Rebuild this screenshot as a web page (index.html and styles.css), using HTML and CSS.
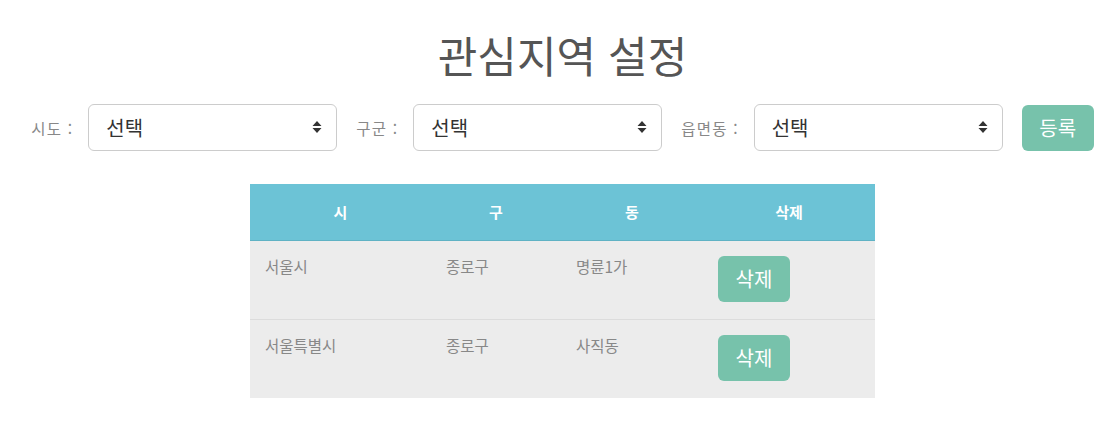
FILE: index.html
```html
<!DOCTYPE html>
<html lang="ko">
<head>
<meta charset="utf-8">
<title>관심지역 설정</title>
<link rel="stylesheet" href="styles.css">
</head>
<body>
<div class="page">
  <h1 class="title">관심지역 설정</h1>
  <div class="filters">
    <label class="flabel">시도 :</label>
    <div class="sel-wrap">
      <select class="sel"><option>선택</option></select>
      <svg class="caret" width="10" height="14" viewBox="0 0 10 14"><path d="M5 1 L9.5 6 H0.5 Z M5 13 L9.5 8 H0.5 Z" fill="#333"/></svg>
    </div>
    <label class="flabel">구군 :</label>
    <div class="sel-wrap">
      <select class="sel"><option>선택</option></select>
      <svg class="caret" width="10" height="14" viewBox="0 0 10 14"><path d="M5 1 L9.5 6 H0.5 Z M5 13 L9.5 8 H0.5 Z" fill="#333"/></svg>
    </div>
    <label class="flabel">읍면동 :</label>
    <div class="sel-wrap">
      <select class="sel"><option>선택</option></select>
      <svg class="caret" width="10" height="14" viewBox="0 0 10 14"><path d="M5 1 L9.5 6 H0.5 Z M5 13 L9.5 8 H0.5 Z" fill="#333"/></svg>
    </div>
    <button class="btn btn-reg">등록</button>
  </div>
  <table class="tbl">
    <colgroup>
      <col class="c1"><col class="c2"><col class="c3"><col class="c4">
    </colgroup>
    <thead>
      <tr><th>시</th><th>구</th><th>동</th><th>삭제</th></tr>
    </thead>
    <tbody>
      <tr><td>서울시</td><td>종로구</td><td>명륜1가</td><td><button class="btn btn-del">삭제</button></td></tr>
      <tr><td>서울특별시</td><td>종로구</td><td>사직동</td><td><button class="btn btn-del">삭제</button></td></tr>
    </tbody>
  </table>
</div>
</body>
</html>
```
FILE: styles.css
```css
html, body {
  margin: 0;
  padding: 0;
  background: #fff;
}
body {
  font-family: "Noto Sans CJK KR", "Noto Sans", sans-serif;
  color: #555;
}
.page {
  padding: 23px 0 0 15px;
  display: flex;
  flex-direction: column;
  align-items: center;
}
.title {
  margin: 0;
  font-size: 43px;
  line-height: 62px;
  font-weight: 400;
  color: #555;
}
.filters {
  margin-top: 19px;
  display: flex;
  align-items: center;
}
.flabel {
  font-size: 15.5px;
  color: #888;
  letter-spacing: 1.2px;
  margin-right: 15px;
}
.sel-wrap {
  position: relative;
  width: 249px;
  height: 47px;
  margin-right: 19px;
}
.sel {
  appearance: none;
  -webkit-appearance: none;
  width: 100%;
  height: 100%;
  box-sizing: border-box;
  border: 1px solid #ccc;
  border-radius: 6px;
  background: #fff;
  padding: 0 17px;
  font-family: "Noto Sans CJK KR", sans-serif;
  font-size: 20px;
  color: #333;
}
.caret {
  position: absolute;
  right: 15px;
  top: 16px;
  pointer-events: none;
}
.btn {
  border: none;
  border-radius: 6px;
  background: #77c2ab;
  color: #fff;
  font-family: "Noto Sans CJK KR", sans-serif;
  font-size: 20px;
  padding: 0;
  cursor: pointer;
}
.btn-reg {
  width: 72px;
  height: 46px;
}
.tbl {
  margin-top: 33px;
  width: 625px;
  border-collapse: collapse;
  table-layout: fixed;
  background: #ececec;
}
.c1 { width: 181px; }
.c2 { width: 130px; }
.c3 { width: 142px; }
.c4 { width: 172px; }
.tbl th {
  background: #6cc3d6;
  color: #fff;
  font-size: 15px;
  font-weight: 700;
  height: 56px;
  padding: 0;
  text-align: center;
  border-bottom: 1px solid #5fb2c4;
  box-sizing: border-box;
}
.tbl td {
  font-size: 15.5px;
  color: #888;
  vertical-align: top;
  padding: 13px 15px 17px;
  line-height: 24px;
}
.tbl tbody tr + tr td {
  border-top: 1px solid #dcdcdc;
}
.btn-del {
  margin-top: 2px;
  width: 72px;
  height: 46px;
  display: block;
}
```
